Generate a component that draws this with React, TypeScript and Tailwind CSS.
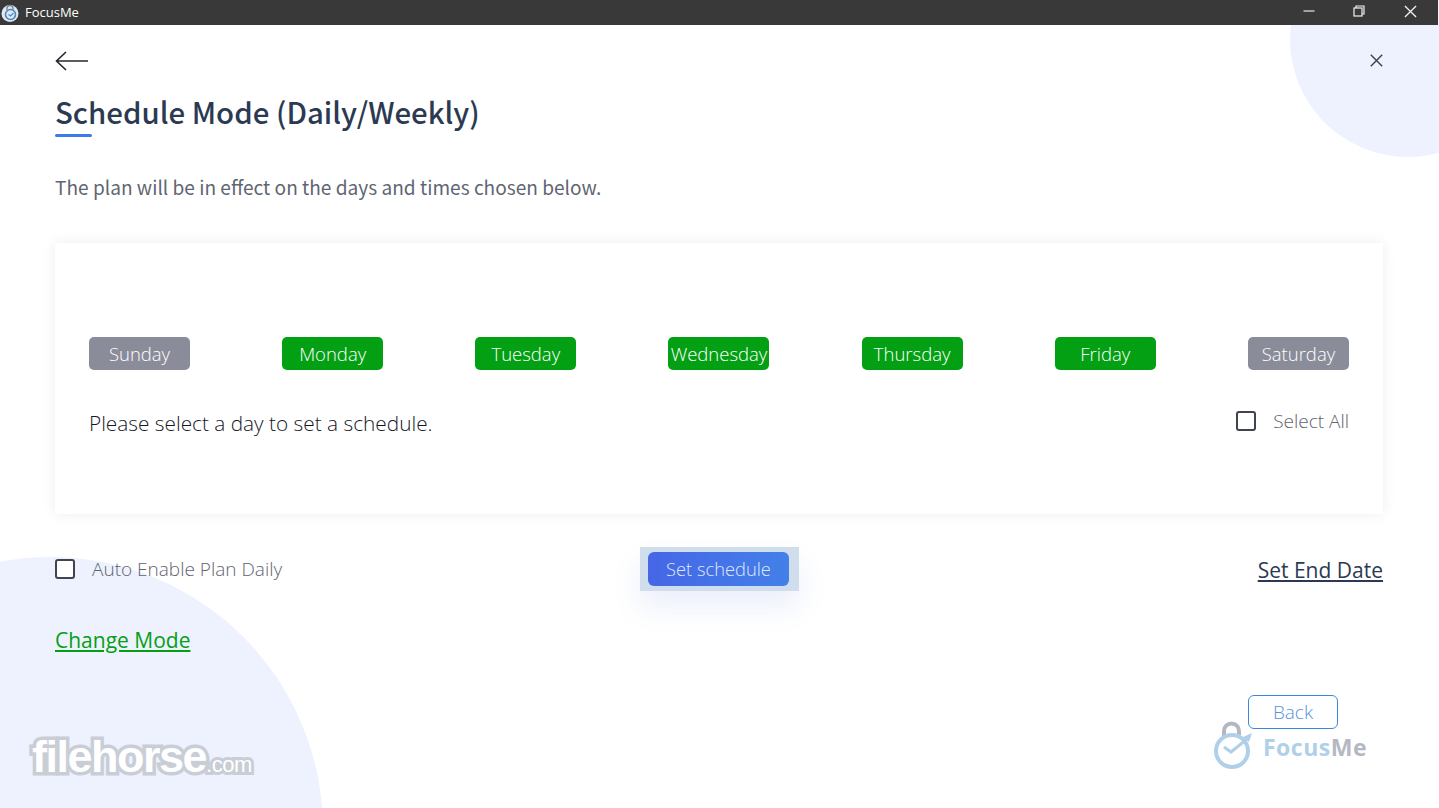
const days = [
  { name: "Sunday", on: false },
  { name: "Monday", on: true },
  { name: "Tuesday", on: true },
  { name: "Wednesday", on: true },
  { name: "Thursday", on: true },
  { name: "Friday", on: true },
  { name: "Saturday", on: false },
];

const AppLogo = () => (
  <svg width="18" height="18" viewBox="0 0 18 18" fill="none">
    <circle cx="9" cy="9.5" r="8.5" fill="#dfe9f5" />
    <circle cx="9.5" cy="10.5" r="5" stroke="#4f86bd" strokeWidth="1.6" />
    <path d="M6 6V4.5a3 3 0 0 1 6 0V6" stroke="#7c8794" strokeWidth="1.4" />
    <path d="M7.5 10.5l2 1.5 3-3" stroke="#4f86bd" strokeWidth="1.2" />
  </svg>
);

const FocusMeMark = () => (
  <svg width="40" height="50" viewBox="0 0 40 50" fill="none">
    <path d="M11 18V11a7.500 7.500 0 0 1 15 0v4" stroke="#b4b8c2" strokeWidth="4" />
    <circle cx="19" cy="31" r="16" stroke="#afd0e8" strokeWidth="4" />
    <path d="M11 27l7 5 L34 19" stroke="#afd0e8" strokeWidth="3" />
    <path d="M30 17l9-4-3 9z" fill="#afd0e8" />
  </svg>
);

const Checkbox = () => (
  <span className="block w-5 h-5 border-2 border-[#3f4450] rounded-[3px] bg-white"></span>
);

export default function App() {
  return (
    <div className="relative w-[1439px] h-[808px] overflow-hidden bg-white font-['Noto_Sans_CJK_SC','Noto_Sans',sans-serif]">
      {/* decorative circles */}
      <div className="absolute left-[1290px] top-[-79px] w-[236px] h-[236px] rounded-full bg-[#edf2fe]"></div>
      <div className="absolute left-[-222px] top-[557px] w-[545px] h-[545px] rounded-full bg-[#edf2fe]"></div>

      <div className="relative flex flex-col w-[1438px] h-full">
        {/* title bar */}
        <div className="flex items-center justify-between h-[25px] bg-[#393939] text-white shrink-0">
          <div className="flex items-center gap-[6px] pl-[1px]">
            <AppLogo />
            <span className="text-[13px] leading-none font-['Open_Sans',sans-serif]">FocusMe</span>
          </div>
          <div className="flex items-center pr-[21px] pb-[3px]">
            <svg width="12" height="12" viewBox="0 0 12 12" className="mr-[38px]">
              <path d="M0.500 6h11" stroke="#e8e8e8" strokeWidth="1.2" />
            </svg>
            <svg width="12" height="12" viewBox="0 0 12 12" fill="none" className="mr-[39px]">
              <rect x="1" y="3" width="8" height="8" stroke="#f2f2f2" strokeWidth="1.2" />
              <path d="M3 3V1h8v8H9" stroke="#f2f2f2" strokeWidth="1.2" />
            </svg>
            <svg width="13" height="13" viewBox="0 0 14 14">
              <path d="M1 1l12 12M13 1L1 13" stroke="#f2f2f2" strokeWidth="1.4" />
            </svg>
          </div>
        </div>

        <div className="flex flex-col flex-1 px-[55px]">
          <div className="flex items-center justify-between pt-[21px] h-[50px]">
            <svg width="34" height="22" viewBox="0 0 34 22" fill="none">
              <path d="M33 11H1.500M11 2l-9.500 9 9.500 9" stroke="#24272e" strokeWidth="1.6" />
            </svg>
            <svg width="13" height="13" viewBox="0 0 13 13">
              <path d="M0.800 0.800l11.400 11.400M12.200 0.800L0.800 12.200" stroke="#3a3f4c" strokeWidth="1.4" />
            </svg>
          </div>

          <h1 className="mt-[14px] text-[29.4px] leading-[44px] font-medium text-[#2b3a52]">Schedule Mode (Daily/Weekly)</h1>
          <div className="mt-px w-[37px] h-[3px] rounded-full bg-[#3d7bea]"></div>

          <p className="mt-[35px] text-[19.1px] leading-[30px] text-[#5f6673]">
            The plan will be in effect on the days and times chosen below.
          </p>

          <div className="mt-[41px] h-[271px] bg-white shadow-[0_0_12px_rgba(60,70,110,0.09)] px-[34px] pt-[94px]">
            <div className="flex justify-between">
              {days.map((d) => (
                <div
                  key={d.name}
                  className={`flex items-center justify-center w-[101px] h-[33px] rounded-[5px] text-white text-[18.5px] font-['Open_Sans',sans-serif] font-light ${
                    d.on ? "bg-[#04a014]" : "bg-[#8a8c9a]"
                  }`}
                >
                  {d.name}
                </div>
              ))}
            </div>
            <div className="flex items-center justify-between mt-[34px]">
              <span className="text-[20.8px] leading-[38px] text-[#14171f] font-['Open_Sans',sans-serif] font-light">
                Please select a day to set a schedule.
              </span>
              <div className="flex items-center gap-[17px] mt-[-4px]">
                <Checkbox />
                <span className="text-[19px] text-[#5f6470] font-['Open_Sans',sans-serif] font-light">Select All</span>
              </div>
            </div>
          </div>

          <div className="relative flex items-center justify-between mt-[33px] h-[46px]">
            <div className="flex items-center gap-[17px] pb-[2px]">
              <Checkbox />
              <span className="text-[19px] text-[#5f6470] font-['Open_Sans',sans-serif] font-light">Auto Enable Plan Daily</span>
            </div>
            <div className="absolute left-[585px] top-0 w-[159px] h-[44px] flex items-center justify-center pr-[2px] bg-[#cfdded] shadow-[0_16px_28px_rgba(90,120,220,0.12)]">
              <button className="w-[141px] h-[34px] rounded-[6px] bg-gradient-to-r from-[#4666e6] to-[#4380e8] text-[#dfe8fb] text-[18.3px] font-['Open_Sans',sans-serif] font-light">
                Set schedule
              </button>
            </div>
            <a className="pt-[2px] text-[21px] text-[#2b3a52] underline font-['Open_Sans',sans-serif]">Set End Date</a>
          </div>

          <a className="mt-[32px] text-[21px] leading-[30px] text-[#04a014] underline font-['Open_Sans',sans-serif]">Change Mode</a>
        </div>
      </div>

      {/* Back + logo */}
      <div className="absolute left-[1213px] top-[720px] flex items-end gap-[10px] h-[50px]">
        <FocusMeMark />
        <span className="text-[23px] leading-[46px] font-bold tracking-[0.5px] font-['Open_Sans',sans-serif] text-[#afd0e8]">
          Focus<span className="text-[#b4b8c2]">Me</span>
        </span>
      </div>
      <button className="absolute left-[1248px] top-[695px] w-[90px] h-[34px] rounded-[6px] border border-[#3d86e0] bg-white text-[#5a93dc] text-[19px] font-['Open_Sans',sans-serif] font-light">
        Back
      </button>

      {/* watermark */}
      <div className="absolute left-[32px] top-[732px] flex items-baseline text-white font-['Liberation_Sans',sans-serif] font-bold leading-[50px] [paint-order:stroke] [-webkit-text-stroke:7px_#c8cdd6]">
        <span className="text-[45px] tracking-[-1.5px]">filehorse</span>
        <span className="text-[22px] font-normal tracking-[-0.5px] [-webkit-text-stroke:6px_#c8cdd6]">.com</span>
      </div>
    </div>
  );
}
